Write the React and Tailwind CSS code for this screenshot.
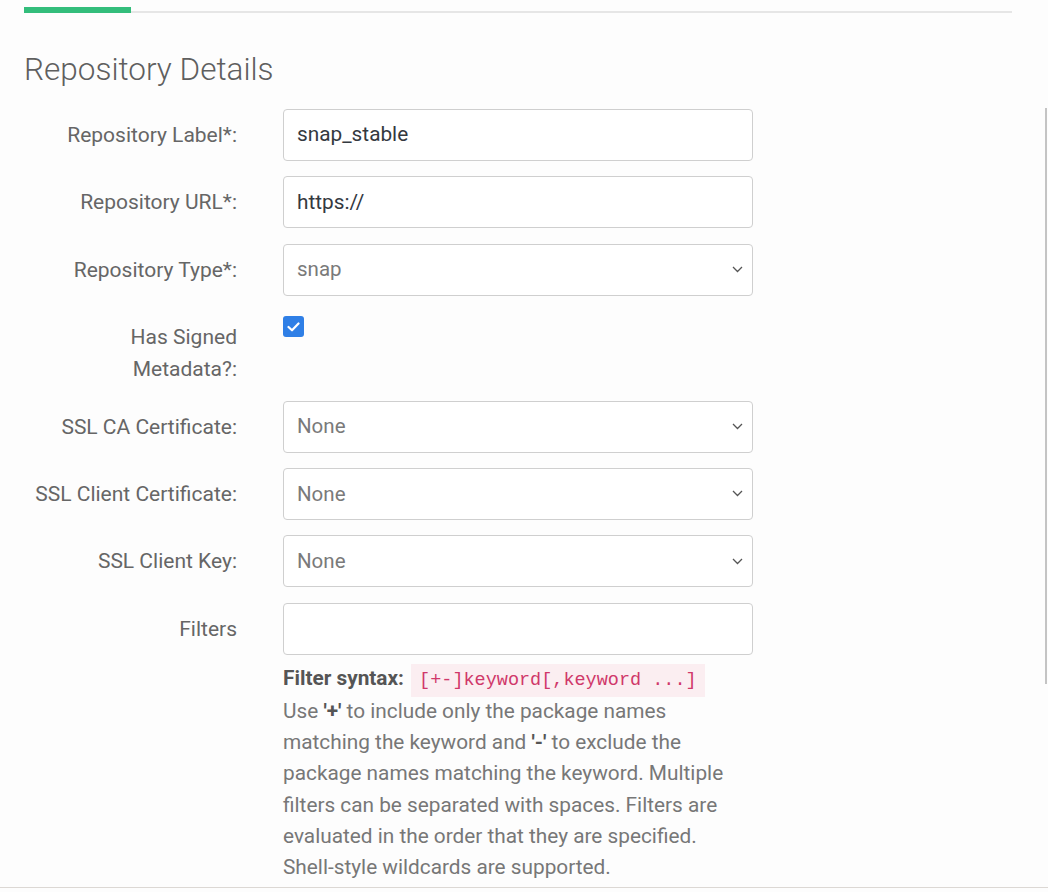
import React from "react";

const Chevron = () => (
  <svg width="11" height="7" viewBox="0 0 11 7" className="shrink-0">
    <polyline points="1,1 5.5,5.5 10,1" fill="none" stroke="#555" strokeWidth="1.3" />
  </svg>
);

const FieldRow = ({ label, children, last }) => (
  <div className={`flex ${last ? "" : "mb-[15.4px]"}`}>
    <label className="w-[213px] shrink-0 pt-[10px] text-right text-[21px] leading-[32px] text-[#666]">
      {label}
    </label>
    <div className="ml-[46px] w-[470px]">{children}</div>
  </div>
);

const TextInput = ({ value }) => (
  <div className="flex h-[52px] items-center rounded-[4px] border border-[#cfcfcf] bg-white px-[13px] text-[20.8px] text-[#34393f]">
    {value}
  </div>
);

const SelectBox = ({ value }) => (
  <div className="flex h-[52px] items-center justify-between rounded-[4px] border border-[#cfcfcf] bg-white pl-[13px] pr-[9px] text-[20.5px] text-[#7a7a7a]">
    <span>{value}</span>
    <Chevron />
  </div>
);

export default function App() {
  return (
    <div className="flex h-[892px] flex-col overflow-hidden bg-[#fdfdfd] font-['Roboto',sans-serif]">
      <div className="flex h-[887px] overflow-hidden">
        <div className="w-[1012px] shrink-0 pl-[24px] pt-[7px]">
          {/* tab strip */}
          <div className="flex h-[6px]">
            <div className="w-[107px] bg-[#33bd7b]" />
            <div className="h-[2px] flex-1 self-end bg-[#e6e6e6]" />
          </div>

          <h2 className="mt-[38px] text-[31.5px] font-light leading-[38px] text-[#5f5f5f]">
            Repository Details
          </h2>

          <div className="mt-[20px]">
            <FieldRow label="Repository Label*:">
              <TextInput value="snap_stable" />
            </FieldRow>
            <FieldRow label="Repository URL*:">
              <TextInput value="https://" />
            </FieldRow>
            <FieldRow label="Repository Type*:">
              <SelectBox value="snap" />
            </FieldRow>
            <FieldRow label={<>Has Signed<br />Metadata?:</>}>
              <div className="mt-[5px] flex h-[21px] w-[21px] items-center justify-center rounded-[3px] bg-[#2f7fe6]">
                <svg width="13" height="10" viewBox="0 0 13 10">
                  <polyline points="1.5,5 5,8.3 11.5,1.5" fill="none" stroke="#fff" strokeWidth="2.2" strokeLinecap="round" strokeLinejoin="round" />
                </svg>
              </div>
            </FieldRow>
            <FieldRow label="SSL CA Certificate:">
              <SelectBox value="None" />
            </FieldRow>
            <FieldRow label="SSL Client Certificate:">
              <SelectBox value="None" />
            </FieldRow>
            <FieldRow label="SSL Client Key:">
              <SelectBox value="None" />
            </FieldRow>
            <FieldRow label="Filters" last>
              <TextInput value="" />
              <p className="mt-[8px] text-[20.8px] leading-[31.2px] text-[#777]">
                <strong className="font-bold text-[#555]">Filter syntax:</strong>{" "}
                <code className="ml-[2px] bg-[#fbeef1] px-[8px] py-[6px] font-['Liberation_Mono',monospace] text-[18.5px] text-[#d0386a]">
                  [+-]keyword[,keyword ...]
                </code>
                <br />
                Use <strong className="font-bold text-[#555]">'+'</strong> to include only the package names
                <br />
                matching the keyword and <strong className="font-bold text-[#555]">'-'</strong> to exclude the
                <br />
                package names matching the keyword. Multiple
                <br />
                filters can be separated with spaces. Filters are
                <br />
                evaluated in the order that they are specified.
                <br />
                Shell-style wildcards are supported.
              </p>
            </FieldRow>
          </div>
        </div>
        <div className="ml-[33px] mt-[108px] h-[576px] w-[2px] shrink-0 bg-[#c4c4c4]" />
      </div>
      <div className="h-[1px] bg-[#dcd8d4]" />
    </div>
  );
}
